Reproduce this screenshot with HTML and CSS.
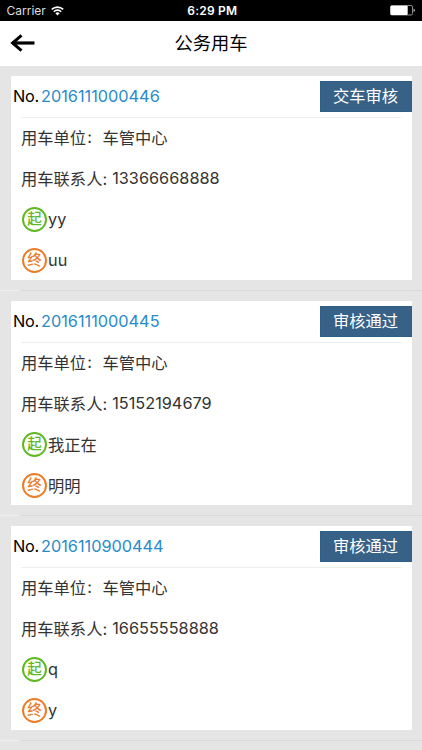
FILE: index.html
```html
<!DOCTYPE html>
<html lang="zh-CN">
<head>
    <meta charset="UTF-8">
    <meta name="viewport" content="width=device-width, initial-scale=1.0">
    <title>公务用车</title>
    <link rel="stylesheet" href="styles.css">
</head>
<body>
    <div class="status-bar">
        <div class="carrier">
            <span>Carrier</span>
            <svg class="wifi" width="13" height="10" viewBox="0 0 13 10" fill="none" stroke="#fff" stroke-width="1.6">
                <path d="M0.8 3.4 A8.2 8.2 0 0 1 12.2 3.4"/>
                <path d="M2.8 5.7 A5.2 5.2 0 0 1 10.2 5.7"/>
                <path d="M6.5 9.4 L4.4 7.3 A2.9 2.9 0 0 1 8.6 7.3 Z" fill="#fff" stroke="none"/>
            </svg>
        </div>
        <span class="time">6:29 PM</span>
        <svg class="battery" width="26" height="11" viewBox="0 0 26 11">
            <rect x="0.5" y="0.5" width="22" height="9.5" rx="1.5" fill="none" stroke="#8a8a8a"/>
            <rect x="0.5" y="0.7" width="17.2" height="9.2" rx="1" fill="#fff"/>
            <path d="M23.6 3.4 Q26 5.2 23.6 7.1 Z" fill="#eee"/>
        </svg>
    </div>

    <header class="nav-bar">
        <svg class="back" width="25" height="18" viewBox="0 0 25 18" fill="none" stroke="#000" stroke-width="3.2">
            <path d="M2 9 H24.5"/>
            <path d="M11.5 1.3 L2.6 9 L11.5 16.7" stroke-width="3"/>
        </svg>
        <h1>公务用车</h1>
    </header>

    <main class="order-list">
        <div class="cell">
            <section class="card">
                <div class="card-head">
                    <span class="label">No.</span>
                    <span class="number">2016111000446</span>
                    <button class="status">交车审核</button>
                </div>
                <div class="row">用车单位<span class="colon">:</span>车管中心</div>
                <div class="row">用车联系人: <span class="phone">13366668888</span></div>
                <div class="row place"><span class="badge start">起</span>yy</div>
                <div class="row place"><span class="badge end">终</span>uu</div>
            </section>
        </div>
        <div class="cell">
            <section class="card">
                <div class="card-head">
                    <span class="label">No.</span>
                    <span class="number">2016111000445</span>
                    <button class="status">审核通过</button>
                </div>
                <div class="row">用车单位<span class="colon">:</span>车管中心</div>
                <div class="row">用车联系人: <span class="phone">15152194679</span></div>
                <div class="row place"><span class="badge start">起</span>我正在</div>
                <div class="row place"><span class="badge end">终</span>明明</div>
            </section>
        </div>
        <div class="cell">
            <section class="card">
                <div class="card-head">
                    <span class="label">No.</span>
                    <span class="number">2016110900444</span>
                    <button class="status">审核通过</button>
                </div>
                <div class="row">用车单位<span class="colon">:</span>车管中心</div>
                <div class="row">用车联系人: <span class="phone">16655558888</span></div>
                <div class="row place"><span class="badge start">起</span>q</div>
                <div class="row place"><span class="badge end">终</span>y</div>
            </section>
        </div>
    </main>
</body>
</html>
```

FILE: styles.css
```css
* {
    box-sizing: border-box;
}

body {
    margin: 0;
    height: 750px;
    overflow: hidden;
    background-color: #e5e5e5;
    font-family: Inter, "Noto Sans CJK SC", sans-serif;
    font-size: 16.3px;
    color: #333;
}

.status-bar {
    display: grid;
    grid-template-columns: 1fr auto 1fr;
    align-items: center;
    height: 21px;
    padding: 0 6px 0 6.5px;
    background-color: #000;
    color: #fff;
    font-size: 12px;
}

.carrier {
    display: flex;
    align-items: center;
    gap: 5px;
    color: #ddd;
}

.time {
    margin-left: 2px;
    font-weight: 600;
    letter-spacing: 0.2px;
}

.battery {
    justify-self: end;
}

.nav-bar {
    display: grid;
    grid-template-columns: 1fr auto 1fr;
    align-items: center;
    height: 44.5px;
    padding: 0 10px;
    background-color: #fff;
}

.nav-bar h1 {
    margin: 0;
    font-size: 18.3px;
    font-weight: 400;
    line-height: 44px;
    color: #000;
}

.cell {
    height: 225px;
    padding: 10px 10px 0 10.5px;
    background:
        linear-gradient(#efefef, #efefef) 0 100% / 20px 1px no-repeat,
        linear-gradient(#d9dadd, #d9dadd) 20px 100% / 100% 1px no-repeat;
}

.card {
    height: 204.5px;
    background-color: #fff;
}

.card-head {
    display: flex;
    align-items: center;
    height: 42px;
    padding-left: 2.5px;
    background: linear-gradient(#eee, #eee) 10px 100% / 380px 1px no-repeat;
}

.label,
.number {
    padding-bottom: 2px;
}

.label {
    width: 28px;
    color: #000;
    letter-spacing: -0.3px;
}

.number {
    color: #2a8bc9;
}

.status {
    width: 92px;
    height: 31px;
    margin-left: auto;
    padding: 0 1px 1px 0;
    border: 1px solid #2d5f88;
    background-color: #376186;
    color: #fff;
    font: inherit;
    line-height: 27px;
}

.row {
    display: flex;
    align-items: center;
    height: 40.75px;
    padding: 0 0 1px 10.5px;
    white-space: pre;
}

/* as wide as one Chinese character */
.colon {
    width: 1em;
    padding-left: 1px;
}

.phone {
    margin-left: 0.5px;
}

.place {
    padding: 0 0 0 11.5px;
}

.badge {
    width: 25px;
    height: 25px;
    margin-right: 1px;
    border: 2px solid;
    border-radius: 50%;
    font-size: 14.5px;
    font-weight: 500;
    line-height: 20px;
    text-align: center;
}

.start {
    color: #5fb922;
}

.end {
    color: #ea7d28;
}
```
